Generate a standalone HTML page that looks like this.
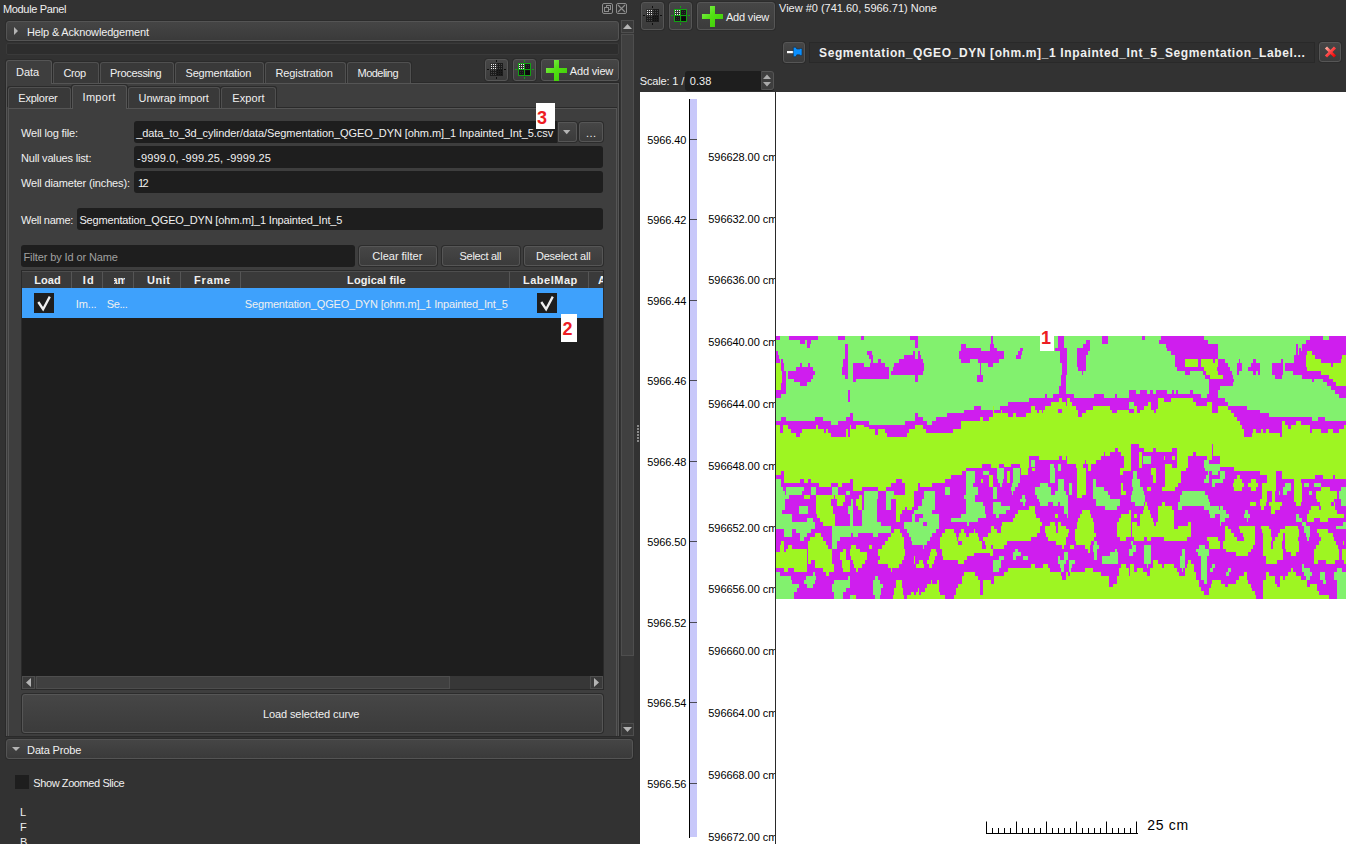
<!DOCTYPE html>
<html><head>
<meta charset="utf-8">
<title>Module Panel</title>
<style>
*{box-sizing:border-box;margin:0;padding:0}
html,body{width:1346px;height:844px;overflow:hidden;background:#323232}
body{position:relative;font-family:"Liberation Sans",sans-serif;font-size:11px;color:#f0f0f0;-webkit-font-smoothing:antialiased}
.a{position:absolute}
.t{position:absolute;white-space:nowrap;line-height:14px;height:14px}
.btn{position:absolute;border:1px solid #565656;border-radius:3px;background:linear-gradient(#464646,#3b3b3b);box-shadow:0 0 0 1px #2c2c2c;text-align:center;white-space:nowrap}
.fld{position:absolute;background:#1e1e1e;border-radius:3px;white-space:nowrap;overflow:hidden}
.tab{position:absolute;border:1px solid #505050;border-bottom:none;border-radius:3px 3px 0 0;background:#393939;box-shadow:-1px -1px 0 #2b2b2b,1px -1px 0 #2b2b2b;text-align:center;white-space:nowrap}
.tab.on{background:#3e3e3e;border-color:#555}
.bar{position:absolute;border:1px solid #545454;border-radius:3px;background:linear-gradient(#454545,#3a3a3a);box-shadow:0 0 0 1px #2c2c2c}
.hd{position:absolute;top:271px;height:17px;background:#3a3a3a;border-top:1px solid #4e4e4e;border-right:1px solid #555;font-weight:bold;text-align:center;line-height:17px;white-space:nowrap;overflow:hidden}
.b{font-weight:bold}
.ax{position:absolute;white-space:nowrap;color:#000;font-size:11px;line-height:12px;height:12px}
</style>
</head>
<body>

<svg width="0" height="0" style="position:absolute">
  <defs>
    <linearGradient id="gp" x1="0" y1="0" x2="1" y2="1"><stop offset="0" stop-color="#8cf060"></stop><stop offset="0.45" stop-color="#52e012"></stop><stop offset="1" stop-color="#3cc808"></stop></linearGradient>
    <linearGradient id="gx" x1="0" y1="0" x2="1" y2="1"><stop offset="0" stop-color="#ffb4a6"></stop><stop offset="0.45" stop-color="#ff4a4a"></stop><stop offset="1" stop-color="#f00000"></stop></linearGradient>
  </defs>
</svg>

<!-- ================= LEFT : MODULE PANEL ================= -->
<div id="left" class="a" style="left:0;top:0;width:636px;height:844px;background:#323232">

  <div class="t" style="left: 3px; top: 2px; letter-spacing: -0.344px;">Module Panel</div>

  <!-- float / close icons -->
  <svg class="a" style="left:601px;top:2px" width="28" height="13" viewBox="0 0 28 13">
    <rect x="1.5" y="1.5" width="10" height="10" rx="1.5" fill="none" stroke="#8c8c8c"></rect>
    <rect x="5.5" y="3.5" width="4" height="4" fill="none" stroke="#8c8c8c"></rect>
    <rect x="3.5" y="5.500" width="4" height="4" fill="#323232" stroke="#8c8c8c"></rect>
    <rect x="15.5" y="1.5" width="10" height="10" rx="1.5" fill="none" stroke="#8c8c8c"></rect>
    <path d="M17 3 L24 10 M24 3 L17 10" stroke="#8c8c8c" stroke-width="1.2" fill="none"></path>
  </svg>

  <!-- help bar -->
  <div class="bar" style="left:6px;top:21px;width:613px;height:20px"></div>
  <svg class="a" style="left:13px;top:26px" width="6" height="10"><path d="M1 1 L5 5 L1 9 Z" fill="#b4b4b4"></path></svg>
  <div class="t" style="left: 27px; top: 25px; letter-spacing: -0.16px;">Help &amp; Acknowledgement</div>

  <!-- thin dark strip -->
  <div class="a" style="left:6px;top:43px;width:613px;height:12px;background:#2d2d2d;border:1px solid #3a3a3a;border-radius:2px"></div>

  <!-- outer tab pane -->
  <div class="a" style="left:6px;top:83px;width:613px;height:653px;background:#3e3e3e;border:1px solid #555;border-bottom:none;box-shadow:0 0 0 1px #2a2a2a"></div>

  <!-- main tabs -->
  <div class="tab on" style="left:6px;top:60px;width:46px;height:24px"></div>
  <div class="tab" style="left:53px;top:62px;width:46px;height:21px"></div>
  <div class="tab" style="left:100px;top:62px;width:74px;height:21px"></div>
  <div class="tab" style="left:175px;top:62px;width:89px;height:21px"></div>
  <div class="tab" style="left:265px;top:62px;width:81px;height:21px"></div>
  <div class="tab" style="left:347px;top:62px;width:64px;height:21px"></div>
  <div class="t" style="left: 16px; top: 65px; letter-spacing: -0.017px;">Data</div>
  <div class="t" style="left: 63.5px; top: 66px; letter-spacing: -0.448px;">Crop</div>
  <div class="t" style="left: 110px; top: 66px; letter-spacing: -0.302px;">Processing</div>
  <div class="t" style="left: 185.5px; top: 66px; letter-spacing: -0.19px;">Segmentation</div>
  <div class="t" style="left: 275.5px; top: 66px; letter-spacing: -0.118px;">Registration</div>
  <div class="t" style="left: 357.5px; top: 66px; letter-spacing: -0.52px;">Modeling</div>

  <!-- corner buttons -->
  <div class="btn" style="left:485px;top:59px;width:23px;height:22px"></div>
  <svg class="a" style="left:485px;top:59px" width="23" height="22"><rect x="5" y="4" width="13" height="13" fill="#1c1c1c"></rect><rect x="5" y="4" width="7" height="7" fill="#303030"></rect><g fill="#f0f0f0"><rect x="6" y="5" width="1" height="1"></rect><rect x="8" y="5" width="1" height="1"></rect><rect x="10" y="5" width="1" height="1"></rect><rect x="6" y="7" width="1" height="1"></rect><rect x="8" y="7" width="1" height="1"></rect><rect x="10" y="7" width="1" height="1"></rect><rect x="6" y="9" width="1" height="1"></rect><rect x="8" y="9" width="1" height="1"></rect><rect x="10" y="9" width="1" height="1"></rect></g><g fill="#484848"><rect x="12" y="5" width="1" height="1"></rect><rect x="14" y="5" width="1" height="1"></rect><rect x="16" y="5" width="1" height="1"></rect><rect x="12" y="7" width="1" height="1"></rect><rect x="14" y="7" width="1" height="1"></rect><rect x="16" y="7" width="1" height="1"></rect><rect x="12" y="9" width="1" height="1"></rect><rect x="14" y="9" width="1" height="1"></rect><rect x="16" y="9" width="1" height="1"></rect></g><g fill="#484848"><rect x="6" y="11" width="1" height="1"></rect><rect x="8" y="11" width="1" height="1"></rect><rect x="10" y="11" width="1" height="1"></rect><rect x="6" y="13" width="1" height="1"></rect><rect x="8" y="13" width="1" height="1"></rect><rect x="10" y="13" width="1" height="1"></rect><rect x="6" y="15" width="1" height="1"></rect><rect x="8" y="15" width="1" height="1"></rect><rect x="10" y="15" width="1" height="1"></rect></g><g fill="#101010"><rect x="12" y="11" width="1" height="1"></rect><rect x="14" y="11" width="1" height="1"></rect><rect x="16" y="11" width="1" height="1"></rect><rect x="12" y="13" width="1" height="1"></rect><rect x="14" y="13" width="1" height="1"></rect><rect x="16" y="13" width="1" height="1"></rect><rect x="12" y="15" width="1" height="1"></rect><rect x="14" y="15" width="1" height="1"></rect><rect x="16" y="15" width="1" height="1"></rect></g><g fill="#0e0e0e"><rect x="11" y="1" width="1" height="2"></rect><rect x="11" y="18" width="1" height="2"></rect><rect x="2" y="10" width="2" height="1"></rect><rect x="19" y="10" width="2" height="1"></rect></g></svg>
  <div class="btn" style="left:513px;top:59px;width:23px;height:22px"></div>
  <svg class="a" style="left:513px;top:59px" width="23" height="22"><rect x="5.5" y="4.5" width="12" height="12" fill="#181818" stroke="#12a012"></rect><rect x="6" y="5" width="5" height="5" fill="#343434"></rect><path d="M11.5 4.5V16.5M5.5 10.5H17.5" stroke="#12a012" fill="none"></path><rect x="12.500" y="11.500" width="4.500" height="4.500" fill="#0a0a0a"></rect><g fill="#f0f0f0"><rect x="6" y="5" width="1" height="1"></rect><rect x="8" y="5" width="1" height="1"></rect><rect x="10" y="5" width="1" height="1"></rect><rect x="6" y="7" width="1" height="1"></rect><rect x="8" y="7" width="1" height="1"></rect><rect x="10" y="7" width="1" height="1"></rect><rect x="6" y="9" width="1" height="1"></rect><rect x="8" y="9" width="1" height="1"></rect><rect x="10" y="9" width="1" height="1"></rect></g><g fill="#303030"><rect x="13" y="6" width="1" height="1"></rect><rect x="15" y="6" width="1" height="1"></rect><rect x="13" y="8" width="1" height="1"></rect><rect x="15" y="8" width="1" height="1"></rect></g><g fill="#303030"><rect x="7" y="12" width="1" height="1"></rect><rect x="9" y="12" width="1" height="1"></rect><rect x="7" y="14" width="1" height="1"></rect><rect x="9" y="14" width="1" height="1"></rect></g><g fill="#12a012"><rect x="11" y="1" width="1" height="2"></rect><rect x="11" y="18" width="1" height="2"></rect><rect x="2" y="10" width="2" height="1"></rect><rect x="19" y="10" width="2" height="1"></rect></g></svg>
  <div class="btn" style="left:541px;top:59px;width:78px;height:22px"></div>
  <svg class="a" style="left:545.5px;top:59.5px" width="21" height="21"><path d="M0 8H8V0H13V8H21V13H13V21H8V13H0Z" fill="url(#gp)"></path></svg>
  <div class="t" style="left: 569.8px; top: 64px; letter-spacing: -0.163px;">Add view</div>

  <!-- inner tab pane -->
  <div class="a" style="left:8px;top:108px;width:609px;height:628px;background:#3e3e3e;border:1px solid #555;border-bottom:none;box-shadow:0 -1px 0 #2a2a2a"></div>

  <!-- sub tabs -->
  <div class="tab" style="left:8px;top:87px;width:63px;height:21px"></div>
  <div class="tab on" style="left:72px;top:85px;width:55px;height:24px"></div>
  <div class="tab" style="left:128px;top:87px;width:92px;height:21px"></div>
  <div class="tab" style="left:221px;top:87px;width:55px;height:21px"></div>
  <div class="t" style="left: 18.3px; top: 91px; letter-spacing: -0.21px;">Explorer</div>
  <div class="t" style="left: 82.5px; top: 90px; letter-spacing: 0.322px;">Import</div>
  <div class="t" style="left: 138.6px; top: 91px; letter-spacing: -0.111px;">Unwrap import</div>
  <div class="t" style="left: 232.3px; top: 91px; letter-spacing: 0.101px;">Export</div>

  <!-- form -->
  <div class="t" style="left: 21px; top: 126px; letter-spacing: -0.162px;">Well log file:</div>
  <div class="fld" style="left:134px;top:121px;width:424px;height:22px;border-radius:3px 0 0 3px"></div>
  <div class="t" style="left: 136.2px; top: 126px; letter-spacing: -0.073px;">_data_to_3d_cylinder/data/Segmentation_QGEO_DYN [ohm.m]_1 Inpainted_Int_5.csv</div>
  <div class="btn" style="left:558px;top:122px;width:19px;height:20px;border-radius:0 3px 3px 0"></div>
  <svg class="a" style="left:563px;top:130px" width="8" height="5"><path d="M0 0 L7.400 0 L3.700 4.300 Z" fill="#b4b4b4"></path></svg>
  <div class="btn" style="left:579px;top:122px;width:24px;height:20px"></div>
  <div class="t" style="left: 586px; top: 126px; letter-spacing: 0.414px;">...</div>

  <div class="t" style="left: 21px; top: 151px; letter-spacing: -0.179px;">Null values list:</div>
  <div class="fld" style="left:134px;top:146px;width:469px;height:22px"></div>
  <div class="t" style="left: 137.1px; top: 151px; letter-spacing: 0.141px;">-9999.0, -999.25, -9999.25</div>

  <div class="t" style="left: 21px; top: 176px; letter-spacing: -0.149px;">Well diameter (inches):</div>
  <div class="fld" style="left:134px;top:171px;width:469px;height:22px"></div>
  <div class="t" style="left: 138px; top: 176px; letter-spacing: -1.55px;">12</div>

  <div class="t" style="left: 21px; top: 213px; letter-spacing: -0.281px;">Well name:</div>
  <div class="fld" style="left:77px;top:208px;width:526px;height:22px"></div>
  <div class="t" style="left: 79.4px; top: 213px; letter-spacing: -0.158px;">Segmentation_QGEO_DYN [ohm.m]_1 Inpainted_Int_5</div>

  <!-- filter row -->
  <div class="fld" style="left:21px;top:245px;width:334px;height:22px"></div>
  <div class="t" style="left: 23.5px; top: 250px; color: rgb(160, 160, 160); letter-spacing: -0.115px;">Filter by Id or Name</div>
  <div class="btn" style="left:359px;top:246px;width:78px;height:20px"></div>
  <div class="btn" style="left:442px;top:246px;width:78px;height:20px"></div>
  <div class="btn" style="left:524px;top:246px;width:79px;height:20px"></div>
  <div class="t" style="left: 372.3px; top: 249px; letter-spacing: -0.011px;">Clear filter</div>
  <div class="t" style="left: 459.6px; top: 249px; letter-spacing: -0.316px;">Select all</div>
  <div class="t" style="left: 535.9px; top: 249px; letter-spacing: -0.196px;">Deselect all</div>

  <!-- table -->
  <div class="a" style="left:21px;top:270px;width:583px;height:420px;background:#1e1e1e;border:1px solid #2a2a2a"></div>
  <div class="hd" style="left:22px;width:50px"></div>
  <div class="hd" style="left:72px;width:31px"></div>
  <div class="hd" style="left:103px;width:31px"></div>
  <div class="hd" style="left:134px;width:47px"></div>
  <div class="hd" style="left:181px;width:60px"></div>
  <div class="hd" style="left:241px;width:269px"></div>
  <div class="hd" style="left:510px;width:79px"></div>
  <div class="hd" style="left:589px;width:14px;border-right:none"></div>
  <div class="t b" style="left: 34.2px; top: 273px; letter-spacing: 0.073px;">Load</div>
  <div class="t b" style="left: 82.8px; top: 273px; letter-spacing: 1.119px;">Id</div>
  <div class="a" style="left:113.8px;top:271px;width:11.4px;height:16px;overflow:hidden"><div class="t b" style="left: -10.3px; top: 2px; letter-spacing: 0.01px;">Name</div></div>
  <div class="t b" style="left: 147px; top: 273px; letter-spacing: 0.503px;">Unit</div>
  <div class="t b" style="left: 194.1px; top: 273px; letter-spacing: 0.767px;">Frame</div>
  <div class="t b" style="left: 347.1px; top: 273px; letter-spacing: 0.094px;">Logical file</div>
  <div class="t b" style="left: 523px; top: 273px; letter-spacing: 0.509px;">LabelMap</div>
  <div class="a" style="left:598px;top:271px;width:5px;height:16px;overflow:hidden"><div class="t b" style="left:0px;top:2px">A</div></div>

  <div class="a" style="left:22px;top:288px;width:581px;height:30px;background:#3ea1fc"></div>
  <div class="a" style="left:34px;top:293px;width:20px;height:20px;background:#1e1e1e"></div>
  <svg class="a" style="left:34px;top:293px" width="20" height="20"><path d="M4.300 9 L9.100 16.200 L15.800 3.600" stroke="#f0f0f0" stroke-width="2.3" fill="none"></path></svg>
  <div class="a" style="left:537px;top:293px;width:20px;height:20px;background:#1e1e1e"></div>
  <svg class="a" style="left:537px;top:293px" width="20" height="20"><path d="M4.300 9 L9.100 16.200 L15.800 3.600" stroke="#f0f0f0" stroke-width="2.3" fill="none"></path></svg>
  <div class="t" style="left: 75.8px; top: 297px; letter-spacing: -0.148px;">Im...</div>
  <div class="t" style="left: 106.7px; top: 297px; letter-spacing: -0.381px;">Se...</div>
  <div class="t" style="left: 244.8px; top: 297px; letter-spacing: -0.158px;">Segmentation_QGEO_DYN [ohm.m]_1 Inpainted_Int_5</div>

  <!-- h scrollbar -->
  <div class="a" style="left:22px;top:676px;width:581px;height:13px;background:#373737"></div>
  <div class="a" style="left:22px;top:676px;width:13px;height:13px;border:1px solid #4e4e4e;background:#3a3a3a"></div>
  <svg class="a" style="left:26px;top:678px" width="5" height="9"><path d="M5 0 L5 9 L0 4.5 Z" fill="#b4b4b4"></path></svg>
  <div class="a" style="left:36px;top:676px;width:414px;height:13px;border:1px solid #4e4e4e;background:#404040"></div>
  <div class="a" style="left:590px;top:676px;width:13px;height:13px;border:1px solid #4e4e4e;background:#3a3a3a"></div>
  <svg class="a" style="left:594px;top:678px" width="5" height="9"><path d="M0 0 L0 9 L5 4.5 Z" fill="#b4b4b4"></path></svg>

  <!-- load button -->
  <div class="btn" style="left:22px;top:694px;width:581px;height:39px"></div>
  <div class="t" style="left: 263px; top: 707px; letter-spacing: -0.109px;">Load selected curve</div>

  <!-- v scrollbar -->
  <div class="a" style="left:621px;top:20px;width:13px;height:716px;background:#373737"></div>
  <div class="a" style="left:621px;top:20px;width:13px;height:13px;border:1px solid #4e4e4e;background:#3a3a3a"></div>
  <svg class="a" style="left:623px;top:24px" width="9" height="5"><path d="M0 5 L9 5 L4.5 0 Z" fill="#b4b4b4"></path></svg>
  <div class="a" style="left:621px;top:34px;width:13px;height:622px;border:1px solid #4e4e4e;background:#404040"></div>
  <div class="a" style="left:621px;top:723px;width:13px;height:13px;border:1px solid #4e4e4e;background:#3a3a3a"></div>
  <svg class="a" style="left:623px;top:727px" width="9" height="5"><path d="M0 0 L9 0 L4.5 5 Z" fill="#b4b4b4"></path></svg>

  <!-- data probe -->
  <div class="bar" style="left:6px;top:739px;width:627px;height:20px"></div>
  <svg class="a" style="left:11px;top:746px" width="10" height="6"><path d="M1 1 L9 1 L5 5 Z" fill="#b4b4b4"></path></svg>
  <div class="t" style="left: 27.1px; top: 743px; letter-spacing: -0.162px;">Data Probe</div>
  <div class="a" style="left:15px;top:775px;width:14px;height:14px;background:#1e1e1e"></div>
  <div class="t" style="left: 33.3px; top: 776px; letter-spacing: -0.408px;">Show Zoomed Slice</div>
  <div class="t" style="left:20px;top:805px">L</div>
  <div class="t" style="left:20px;top:820px">F</div>
  <div class="t" style="left:20px;top:835px">B</div>
  <!-- annotations -->
  <div class="a" style="left:536px;top:103px;width:19px;height:26px;background:#fff"></div>
  <div class="a" style="left:537px;top:108px;font:bold 18px/20px 'Liberation Sans',sans-serif;color:#ed1c24">3</div>
  <div class="a" style="left:561px;top:314px;width:16px;height:28px;background:#fff"></div>
  <div class="a" style="left:562.5px;top:319px;font:bold 18px/20px 'Liberation Sans',sans-serif;color:#ed1c24">2</div>
</div>

<!-- splitter handle -->
<div class="a" style="left:634px;top:0;width:6px;height:844px;background:#323232"></div>
<svg class="a" style="left:637px;top:425px" width="2" height="17"><path d="M0 0h2v2h-2zM0 3h2v2h-2zM0 6h2v2h-2zM0 9h2v2h-2zM0 12h2v2h-2zM0 15h2v2h-2z" fill="#8a8a8a"></path></svg>

<!-- ================= RIGHT : VIEW ================= -->
<div id="right" class="a" style="left:640px;top:0;width:706px;height:844px;background:#323232">
  <div class="btn" style="left:1px;top:2px;width:23px;height:28px"></div>
  <svg class="a" style="left:1px;top:5px" width="23" height="22"><rect x="5" y="4" width="13" height="13" fill="#1c1c1c"></rect><rect x="5" y="4" width="7" height="7" fill="#303030"></rect><g fill="#f0f0f0"><rect x="6" y="5" width="1" height="1"></rect><rect x="8" y="5" width="1" height="1"></rect><rect x="10" y="5" width="1" height="1"></rect><rect x="6" y="7" width="1" height="1"></rect><rect x="8" y="7" width="1" height="1"></rect><rect x="10" y="7" width="1" height="1"></rect><rect x="6" y="9" width="1" height="1"></rect><rect x="8" y="9" width="1" height="1"></rect><rect x="10" y="9" width="1" height="1"></rect></g><g fill="#484848"><rect x="12" y="5" width="1" height="1"></rect><rect x="14" y="5" width="1" height="1"></rect><rect x="16" y="5" width="1" height="1"></rect><rect x="12" y="7" width="1" height="1"></rect><rect x="14" y="7" width="1" height="1"></rect><rect x="16" y="7" width="1" height="1"></rect><rect x="12" y="9" width="1" height="1"></rect><rect x="14" y="9" width="1" height="1"></rect><rect x="16" y="9" width="1" height="1"></rect></g><g fill="#484848"><rect x="6" y="11" width="1" height="1"></rect><rect x="8" y="11" width="1" height="1"></rect><rect x="10" y="11" width="1" height="1"></rect><rect x="6" y="13" width="1" height="1"></rect><rect x="8" y="13" width="1" height="1"></rect><rect x="10" y="13" width="1" height="1"></rect><rect x="6" y="15" width="1" height="1"></rect><rect x="8" y="15" width="1" height="1"></rect><rect x="10" y="15" width="1" height="1"></rect></g><g fill="#101010"><rect x="12" y="11" width="1" height="1"></rect><rect x="14" y="11" width="1" height="1"></rect><rect x="16" y="11" width="1" height="1"></rect><rect x="12" y="13" width="1" height="1"></rect><rect x="14" y="13" width="1" height="1"></rect><rect x="16" y="13" width="1" height="1"></rect><rect x="12" y="15" width="1" height="1"></rect><rect x="14" y="15" width="1" height="1"></rect><rect x="16" y="15" width="1" height="1"></rect></g><g fill="#0e0e0e"><rect x="11" y="1" width="1" height="2"></rect><rect x="11" y="18" width="1" height="2"></rect><rect x="2" y="10" width="2" height="1"></rect><rect x="19" y="10" width="2" height="1"></rect></g></svg>
  <div class="btn" style="left:29px;top:2px;width:23px;height:28px"></div>
  <svg class="a" style="left:29px;top:5px" width="23" height="22"><rect x="5.5" y="4.5" width="12" height="12" fill="#181818" stroke="#12a012"></rect><rect x="6" y="5" width="5" height="5" fill="#343434"></rect><path d="M11.5 4.5V16.5M5.5 10.5H17.5" stroke="#12a012" fill="none"></path><rect x="12.500" y="11.500" width="4.500" height="4.500" fill="#0a0a0a"></rect><g fill="#f0f0f0"><rect x="6" y="5" width="1" height="1"></rect><rect x="8" y="5" width="1" height="1"></rect><rect x="10" y="5" width="1" height="1"></rect><rect x="6" y="7" width="1" height="1"></rect><rect x="8" y="7" width="1" height="1"></rect><rect x="10" y="7" width="1" height="1"></rect><rect x="6" y="9" width="1" height="1"></rect><rect x="8" y="9" width="1" height="1"></rect><rect x="10" y="9" width="1" height="1"></rect></g><g fill="#303030"><rect x="13" y="6" width="1" height="1"></rect><rect x="15" y="6" width="1" height="1"></rect><rect x="13" y="8" width="1" height="1"></rect><rect x="15" y="8" width="1" height="1"></rect></g><g fill="#303030"><rect x="7" y="12" width="1" height="1"></rect><rect x="9" y="12" width="1" height="1"></rect><rect x="7" y="14" width="1" height="1"></rect><rect x="9" y="14" width="1" height="1"></rect></g><g fill="#12a012"><rect x="11" y="1" width="1" height="2"></rect><rect x="11" y="18" width="1" height="2"></rect><rect x="2" y="10" width="2" height="1"></rect><rect x="19" y="10" width="2" height="1"></rect></g></svg>
  <div class="btn" style="left:57px;top:2px;width:78px;height:28px"></div>
  <svg class="a" style="left:61.5px;top:5.5px" width="21" height="21"><path d="M0 8H8V0H13V8H21V13H13V21H8V13H0Z" fill="url(#gp)"></path></svg>
  <div class="t" style="left: 85.9px; top: 10px; letter-spacing: -0.177px;">Add view</div>
  <div class="t" style="left: 139px; top: 1px; letter-spacing: -0.007px;">View #0 (741.60, 5966.71) None</div>

  <div class="btn" style="left:143px;top:42px;width:22px;height:21px"></div>
  <svg class="a" style="left:143px;top:42px" width="22" height="21"><rect x="4" y="9" width="7" height="2.2" fill="#fff"></rect><path d="M10.3 5.200L13 5.200L13.800 7L16.5 7L17.3 6.500L19 6.500L19 13.400L17.3 13.400L16.5 12.800L13.800 12.800L13 14.700L10.3 14.700Z" fill="#0a90ff" stroke="#16283c" stroke-width="0.6"></path></svg>
  <div class="a" style="left:169px;top:42px;width:506px;height:21px;background:#2f2f2f;border:1px solid #292929"></div>
  <div class="t" style="left: 179px; top: 45px; font-size: 12px; font-weight: bold; line-height: 16px; height: 16px; letter-spacing: 0.622px;">Segmentation_QGEO_DYN [ohm.m]_1 Inpainted_Int_5_Segmentation_Label...</div>
  <div class="btn" style="left:679px;top:42px;width:22px;height:20px"></div>
  <svg class="a" style="left:679px;top:42px" width="22" height="20"><path d="M7 5.500L16 14.500M16 5.500L7 14.500" stroke="url(#gx)" stroke-width="3" fill="none"></path></svg>

  <div class="t" style="left: -0.3px; top: 74px; letter-spacing: -0.14px;">Scale: 1 /</div>
  <div class="fld" style="left:45px;top:71px;width:89px;height:20px"></div>
  <div class="a" style="left:121px;top:71px;width:13px;height:19px;background:#3e3e3e;border:1px solid #555;border-left-color:#484848;border-radius:0 3px 3px 0"></div>
  <svg class="a" style="left:121px;top:71px" width="13" height="19"><path d="M2 8L10 8L6 3.500Z M2 11L10 11L6 15.500Z" fill="#aaa"></path></svg>
  <div class="t" style="left: 49.8px; top: 74px; letter-spacing: 0.026px;">0.38</div>

  <!-- white canvas -->
  <div class="a" id="canvas" style="left:0;top:92px;width:706px;height:752px;background:#fff;overflow:hidden">
    <div class="a" style="left:50px;top:7px;width:7px;height:738px;background:#c8c8fa"></div>
    <div class="a" style="left:49px;top:7px;width:1px;height:739px;background:#000"></div>
    <div class="a" style="left:50px;top:47px;width:7px;height:1px;background:#4a4a55"></div>
    <div class="ax" style="left: 7.2px; top: 41.7px; letter-spacing: -0.078px;">5966.40</div>
    <div class="a" style="left:50px;top:127px;width:7px;height:1px;background:#4a4a55"></div>
    <div class="ax" style="left: 7.2px; top: 122.2px; letter-spacing: -0.078px;">5966.42</div>
    <div class="a" style="left:50px;top:208px;width:7px;height:1px;background:#4a4a55"></div>
    <div class="ax" style="left: 7.2px; top: 202.7px; letter-spacing: -0.078px;">5966.44</div>
    <div class="a" style="left:50px;top:288px;width:7px;height:1px;background:#4a4a55"></div>
    <div class="ax" style="left: 7.2px; top: 283.2px; letter-spacing: -0.078px;">5966.46</div>
    <div class="a" style="left:50px;top:369px;width:7px;height:1px;background:#4a4a55"></div>
    <div class="ax" style="left: 7.2px; top: 363.7px; letter-spacing: -0.078px;">5966.48</div>
    <div class="a" style="left:50px;top:449px;width:7px;height:1px;background:#4a4a55"></div>
    <div class="ax" style="left: 7.2px; top: 444.1px; letter-spacing: -0.078px;">5966.50</div>
    <div class="a" style="left:50px;top:530px;width:7px;height:1px;background:#4a4a55"></div>
    <div class="ax" style="left: 7.2px; top: 524.6px; letter-spacing: -0.078px;">5966.52</div>
    <div class="a" style="left:50px;top:610px;width:7px;height:1px;background:#4a4a55"></div>
    <div class="ax" style="left: 7.2px; top: 605.1px; letter-spacing: -0.078px;">5966.54</div>
    <div class="a" style="left:50px;top:691px;width:7px;height:1px;background:#4a4a55"></div>
    <div class="ax" style="left: 7.2px; top: 685.6px; letter-spacing: -0.078px;">5966.56</div>
    <div class="a" style="left:60px;top:0;width:75px;height:752px;overflow:hidden">
      <div class="ax" style="left: 8.3px; top: 58.8px; letter-spacing: -0.065px;">596628.00 cm</div>
      <div class="ax" style="left: 8.3px; top: 120.6px; letter-spacing: -0.065px;">596632.00 cm</div>
      <div class="ax" style="left: 8.3px; top: 182.4px; letter-spacing: -0.065px;">596636.00 cm</div>
      <div class="ax" style="left: 8.3px; top: 244.2px; letter-spacing: -0.065px;">596640.00 cm</div>
      <div class="ax" style="left: 8.3px; top: 306px; letter-spacing: -0.065px;">596644.00 cm</div>
      <div class="ax" style="left: 8.3px; top: 367.8px; letter-spacing: -0.065px;">596648.00 cm</div>
      <div class="ax" style="left: 8.3px; top: 429.5px; letter-spacing: -0.065px;">596652.00 cm</div>
      <div class="ax" style="left: 8.3px; top: 491.3px; letter-spacing: -0.065px;">596656.00 cm</div>
      <div class="ax" style="left: 8.3px; top: 553.1px; letter-spacing: -0.065px;">596660.00 cm</div>
      <div class="ax" style="left: 8.3px; top: 614.9px; letter-spacing: -0.065px;">596664.00 cm</div>
      <div class="ax" style="left: 8.3px; top: 676.7px; letter-spacing: -0.065px;">596668.00 cm</div>
      <div class="ax" style="left: 8.3px; top: 738.5px; letter-spacing: -0.065px;">596672.00 cm</div>
    </div>
    <div class="a" style="left:135px;top:0;width:1px;height:752px;background:#2a2a2a"></div>
    <svg class="a" style="left:136px;top:244px" width="570" height="263" viewBox="0 0 570 263" shape-rendering="crispEdges"><rect x="0" y="0" width="570" height="263" fill="#82f16e"></rect><path fill="#cf1eee" d="M0.0 263L0.0 85.2L5.0 85.2L5.0 81.3L10.2 81.3L10.2 85.2L39.1 85.2L39.1 81.3L46.9 81.3L46.9 85.2L54.7 85.2L54.7 89.1L62.1 89.1L62.1 85.2L70.4 85.2L70.4 81.3L73.8 81.3L73.8 77.4L76.9 77.4L76.9 85.2L93.0 85.2L93.0 89.1L129.0 89.1L129.0 85.2L139.2 85.2L139.2 77.4L142.0 77.4L142.0 81.3L147.0 81.3L147.0 85.2L150.9 85.2L150.9 89.1L156.1 89.1L156.1 85.2L159.5 85.2L159.5 81.3L171.2 81.3L171.2 77.4L187.7 77.4L187.7 73.5L190.0 73.5L190.0 263Z"></path><path fill="#cf1eee" d="M190.0 263L190.0 73.5L197.8 73.5L197.8 69.9L204.9 69.9L204.9 73.5L223.6 73.5L223.6 69.9L232.2 69.9L232.2 66.0L253.3 66.0L253.3 62.1L269.0 62.1L269.0 58.2L271.0 58.2L271.0 62.1L277.1 62.1L277.1 58.2L297.9 58.2L297.9 62.1L318.2 62.1L318.2 58.2L327.9 58.2L327.9 62.1L339.3 62.1L339.3 58.2L340.9 58.2L340.9 62.1L353.1 62.1L353.1 54.3L360.0 54.3L360.0 58.2L363.9 58.2L363.9 54.3L370.9 54.3L370.9 58.2L374.2 58.2L374.2 54.3L376.9 54.3L376.9 58.2L380.0 58.2L380.0 263Z"></path><path fill="#cf1eee" d="M380.0 263L380.0 54.3L390.9 54.3L390.9 58.2L395.6 58.2L395.6 54.3L398.0 54.3L398.0 58.2L400.3 58.2L400.3 54.3L401.9 54.3L401.9 58.2L414.1 58.2L414.1 54.3L416.7 54.3L416.7 58.2L425.3 58.2L425.3 62.1L430.8 62.1L430.8 58.2L442.1 58.2L442.1 62.1L448.8 62.1L448.8 66.0L451.9 66.0L451.9 69.9L470.7 69.9L470.7 73.5L484.0 73.5L484.0 77.4L492.9 77.4L492.9 81.3L536.4 81.3L536.4 85.2L541.9 85.2L541.9 81.3L548.9 81.3L548.9 85.2L570.0 85.2L570.0 263Z"></path><path fill="#9ef522" d="M0.0 263L0.0 89.1L3.9 89.1L3.9 97.0L7.0 97.0L7.0 89.1L11.7 89.1L11.7 93.0L15.2 93.0L15.2 97.0L20.0 97.0L20.0 100.9L23.9 100.9L23.9 97.0L25.8 97.0L25.8 93.0L39.9 93.0L39.9 89.1L42.2 89.1L42.2 93.0L48.2 93.0L48.2 97.0L50.0 97.0L50.0 93.0L51.6 93.0L51.6 97.0L55.0 97.0L55.0 100.9L69.9 100.9L69.9 93.0L71.9 93.0L71.9 100.9L73.8 100.9L73.8 89.1L75.1 89.1L75.1 93.0L79.8 93.0L79.8 89.1L88.0 89.1L88.0 90.7L93.0 90.7L93.0 93.0L98.8 93.0L98.8 98.8L102.4 98.8L102.4 93.0L108.7 93.0L108.7 97.0L110.7 97.0L110.7 100.9L131.0 100.9L131.0 97.0L132.6 97.0L132.6 93.0L139.2 93.0L139.2 89.1L147.0 89.1L147.0 93.0L150.1 93.0L150.1 97.0L176.7 97.0L176.7 93.0L185.3 93.0L185.3 85.2L190.0 85.2L190.0 263Z"></path><path fill="#9ef522" d="M190.0 263L190.0 85.2L204.1 85.2L204.1 81.3L206.9 81.3L206.9 85.2L213.1 85.2L213.1 81.3L216.9 81.3L216.9 69.9L218.1 69.9L218.1 77.4L224.7 77.4L224.7 73.5L226.0 73.5L226.0 77.4L232.2 77.4L232.2 81.3L236.9 81.3L236.9 77.4L240.0 77.4L240.0 81.3L250.2 81.3L250.2 77.4L255.4 77.4L255.4 69.9L258.8 69.9L258.8 73.5L261.2 73.5L261.2 77.4L263.2 77.4L263.2 73.5L265.8 73.5L265.8 77.4L266.9 77.4L266.9 73.5L269.4 73.5L269.4 69.9L275.2 69.9L275.2 66.0L283.0 66.0L283.0 62.1L285.7 62.1L285.7 66.0L290.1 66.0L290.1 69.9L291.3 69.9L291.3 62.1L294.0 62.1L294.0 66.0L296.3 66.0L296.3 69.9L299.5 69.9L299.5 73.5L301.8 73.5L301.8 81.3L306.0 81.3L306.0 77.4L309.6 77.4L309.6 73.5L316.7 73.5L316.7 69.9L333.9 69.9L333.9 73.5L336.2 73.5L336.2 77.4L340.9 77.4L340.9 73.5L353.1 73.5L353.1 77.4L358.1 77.4L358.1 69.9L361.2 69.9L361.2 77.4L363.9 77.4L363.9 73.5L368.3 73.5L368.3 69.9L372.2 69.9L372.2 66.0L374.8 66.0L374.8 73.5L377.7 73.5L377.7 77.4L380.0 77.4L380.0 263Z"></path><path fill="#9ef522" d="M380.0 263L380.0 72.7L381.9 72.7L381.9 62.1L387.8 62.1L387.8 66.0L394.9 66.0L394.9 62.1L416.7 62.1L416.7 66.0L420.3 66.0L420.3 69.9L430.8 69.9L430.8 66.0L436.3 66.0L436.3 76.6L442.1 76.6L442.1 69.9L451.9 69.9L451.9 73.5L455.1 73.5L455.1 77.4L458.2 77.4L458.2 81.3L461.0 81.3L461.0 85.2L463.7 85.2L463.7 89.1L466.0 89.1L466.0 93.0L468.4 93.0L468.4 100.9L475.7 100.9L475.7 97.0L477.3 97.0L477.3 93.0L480.1 93.0L480.1 97.0L485.1 97.0L485.1 93.0L487.1 93.0L487.1 97.0L489.5 97.0L489.5 93.0L492.9 93.0L492.9 97.0L504.3 97.0L504.3 100.9L505.9 100.9L505.9 85.2L509.0 85.2L509.0 89.1L512.1 89.1L512.1 93.0L514.8 93.0L514.8 89.1L520.0 89.1L520.0 85.2L525.4 85.2L525.4 89.1L534.0 89.1L534.0 97.0L536.1 97.0L536.1 93.0L545.0 93.0L545.0 97.0L552.0 97.0L552.0 93.0L556.7 93.0L556.7 97.0L563.0 97.0L563.0 93.0L567.7 93.0L567.7 89.1L570.0 89.1L570.0 263Z"></path><path fill="#cf1eee" d="M0.0 263L0.0 139.0L4.7 139.0L4.7 135.1L7.8 135.1L7.8 147.2L24.2 147.2L24.2 142.9L27.8 142.9L27.8 147.2L32.1 147.2L32.1 142.9L34.7 142.9L34.7 147.2L42.5 147.2L42.5 151.1L54.7 151.1L54.7 147.2L61.8 147.2L61.8 151.1L66.0 151.1L66.0 147.2L73.8 147.2L73.8 142.9L76.9 142.9L76.9 155.1L86.0 155.1L86.0 151.1L101.6 151.1L101.6 155.1L109.5 155.1L109.5 151.1L115.3 151.1L115.3 147.2L120.1 147.2L120.1 142.9L125.9 142.9L125.9 147.2L129.0 147.2L129.0 171.1L137.6 171.1L137.6 155.1L142.3 155.1L142.3 147.2L143.6 147.2L143.6 151.1L156.4 151.1L156.4 147.2L168.9 147.2L168.9 142.9L175.1 142.9L175.1 139.0L186.1 139.0L186.1 135.1L190.0 135.1L190.0 263Z"></path><path fill="#cf1eee" d="M190.0 263L190.0 132.0L206.4 132.0L206.4 128.2L215.0 128.2L215.0 132.0L222.8 132.0L222.8 128.2L228.3 128.2L228.3 130.6L234.6 130.6L234.6 128.2L244.0 128.2L244.0 132.0L252.6 132.0L252.6 120.1L263.2 120.1L263.2 124.3L283.0 124.3L283.0 120.1L285.7 120.1L285.7 124.3L290.1 124.3L290.1 120.1L291.3 120.1L291.3 128.2L299.5 128.2L299.5 132.0L307.3 132.0L307.3 128.2L308.8 128.2L308.8 124.3L310.1 124.3L310.1 128.2L312.0 128.2L312.0 132.0L315.1 132.0L315.1 128.2L319.8 128.2L319.8 124.3L324.8 124.3L324.8 120.1L328.4 120.1L328.4 116.0L329.2 116.0L329.2 120.1L333.9 120.1L333.9 116.0L339.3 116.0L339.3 112.1L342.0 112.1L342.0 116.0L344.8 116.0L344.8 120.1L347.9 120.1L347.9 132.0L355.0 132.0L355.0 107.9L362.8 107.9L362.8 112.1L367.5 112.1L367.5 116.0L376.9 116.0L376.9 112.1L380.0 112.1L380.0 263Z"></path><path fill="#cf1eee" d="M380.0 263L380.0 116.0L395.6 116.0L395.6 112.1L401.1 112.1L401.1 132.0L412.1 132.0L412.1 120.1L416.7 120.1L416.7 116.0L419.9 116.0L419.9 120.1L430.8 120.1L430.8 124.3L436.0 124.3L436.0 107.9L437.1 107.9L437.1 120.1L444.1 120.1L444.1 130.6L458.2 130.6L458.2 263Z"></path><path fill="#cf1eee" d="M458.2 263L458.2 135.1L484.0 135.1L484.0 139.0L491.0 139.0L491.0 146.9L500.4 146.9L500.4 135.1L505.9 135.1L505.9 142.9L517.6 142.9L517.6 146.9L525.4 146.9L525.4 142.9L538.7 142.9L538.7 139.0L547.3 139.0L547.3 142.9L556.7 142.9L556.7 139.0L559.1 139.0L559.1 142.9L570.0 142.9L570.0 263Z"></path><path fill="#9ef522" d="M190.0 263L190.0 236.0L198.6 236.0L198.6 239.9L202.2 239.9L202.2 243.8L204.4 243.8L204.4 258.7L206.9 258.7L206.9 243.8L215.0 243.8L215.0 247.7L217.8 247.7L217.8 239.9L228.3 239.9L228.3 236.0L231.9 236.0L231.9 232.1L254.9 232.1L254.9 228.2L258.8 228.2L258.8 232.1L266.9 232.1L266.9 228.2L272.1 228.2L272.1 232.1L274.4 232.1L274.4 236.0L285.1 236.0L285.1 239.9L286.2 239.9L286.2 243.8L290.1 243.8L290.1 236.0L292.4 236.0L292.4 239.9L294.0 239.9L294.0 236.0L308.8 236.0L308.8 232.1L317.0 232.1L317.0 236.0L325.3 236.0L325.3 239.9L333.1 239.9L333.1 250.8L337.0 250.8L337.0 247.7L340.9 247.7L340.9 239.9L342.5 239.9L342.5 232.1L344.8 232.1L344.8 228.2L350.3 228.2L350.3 232.1L352.6 232.1L352.6 239.9L354.2 239.9L354.2 228.2L358.1 228.2L358.1 236.0L360.5 236.0L360.5 232.1L366.7 232.1L366.7 236.0L370.6 236.0L370.6 239.9L373.7 239.9L373.7 232.1L376.9 232.1L376.9 224.3L380.0 224.3L380.0 263Z"></path><path fill="#9ef522" d="M380.0 263L380.0 224.3L382.3 224.3L382.3 228.2L385.5 228.2L385.5 232.1L387.8 232.1L387.8 228.2L398.0 228.2L398.0 232.1L401.1 232.1L401.1 236.0L402.7 236.0L402.7 239.9L408.9 239.9L408.9 232.1L410.5 232.1L410.5 228.2L412.1 228.2L412.1 224.3L414.7 224.3L414.7 228.2L417.5 228.2L417.5 236.0L420.3 236.0L420.3 243.8L423.0 243.8L423.0 250.8L425.3 250.8L425.3 254.8L428.2 254.8L428.2 258.7L433.2 258.7L433.2 251.6L434.7 251.6L434.7 247.7L436.3 247.7L436.3 243.8L444.9 243.8L444.9 247.7L448.8 247.7L448.8 250.8L451.9 250.8L451.9 247.7L459.8 247.7L459.8 243.8L462.9 243.8L462.9 239.9L468.4 239.9L468.4 236.0L470.7 236.0L470.7 243.8L472.3 243.8L472.3 247.7L474.6 247.7L474.6 251.6L476.2 251.6L476.2 254.8L478.5 254.8L478.5 258.7L480.1 258.7L480.1 262.6L487.1 262.6L487.1 243.8L490.2 243.8L490.2 236.0L492.9 236.0L492.9 239.9L498.8 239.9L498.8 247.7L501.2 247.7L501.2 250.8L503.5 250.8L503.5 239.9L507.0 239.9L507.0 243.8L509.0 243.8L509.0 239.9L512.1 239.9L512.1 236.0L515.3 236.0L515.3 232.1L516.8 232.1L516.8 236.0L520.0 236.0L520.0 239.9L525.4 239.9L525.4 243.8L530.9 243.8L530.9 250.8L534.0 250.8L534.0 247.7L541.1 247.7L541.1 254.8L542.6 254.8L542.6 258.7L552.8 258.7L552.8 262.6L570.0 262.6L570.0 263Z"></path><path fill="#cf1eee" d="M0.0 0.0H3.9V3.9H0.0ZM13.3 0.0H41.9V3.9H13.3ZM62.1 0.0H68.8V3.9H62.1ZM85.2 0.0H87.9V3.9H85.2ZM134.2 0.0H142.0V3.9H134.2ZM23.5 3.9H28.9V7.8H23.5ZM31.3 3.9H34.7V7.8H31.3ZM139.2 3.9H142.0V7.8H139.2ZM31.3 7.8H33.6V11.7H31.3ZM69.3 7.8H71.9V11.7H69.3ZM139.2 7.8H142.0V11.7H139.2ZM185.3 7.8H190.0V11.7H185.3ZM69.3 11.7H71.9V15.2H69.3ZM185.3 11.7H190.0V15.2H185.3ZM0.0 15.2H1.9V19.1H0.0ZM69.3 15.2H71.9V19.1H69.3ZM91.2 15.2H95.7V19.1H91.2ZM137.3 15.2H139.2V19.1H137.3ZM142.0 15.2H143.9V19.1H142.0ZM183.0 15.2H190.0V19.1H183.0ZM0.0 19.1H3.1V23.1H0.0ZM69.3 19.1H71.9V23.1H69.3ZM93.0 19.1H96.6V23.1H93.0ZM128.2 19.1H139.2V23.1H128.2ZM142.0 19.1H145.4V23.1H142.0ZM183.0 19.1H190.0V23.1H183.0ZM0.0 23.1H3.9V26.9H0.0ZM4.7 23.1H7.0V26.9H4.7ZM67.2 23.1H71.9V26.9H67.2ZM95.1 23.1H97.0V26.9H95.1ZM102.4 23.1H104.8V26.9H102.4ZM123.2 23.1H147.0V26.9H123.2ZM185.3 23.1H190.0V26.9H185.3ZM4.7 26.9H7.8V31.0H4.7ZM23.5 26.9H25.8V31.0H23.5ZM32.1 26.9H33.6V31.0H32.1ZM67.2 26.9H71.9V31.0H67.2ZM77.1 26.9H88.0V31.0H77.1ZM93.5 26.9H108.7V31.0H93.5ZM118.1 26.9H147.8V31.0H118.1ZM4.7 31.0H7.8V35.2H4.7ZM20.0 31.0H37.2V35.2H20.0ZM66.0 31.0H71.9V35.2H66.0ZM77.1 31.0H112.6V35.2H77.1ZM116.5 31.0H147.8V35.2H116.5ZM5.5 35.2H9.7V38.8H5.5ZM12.2 35.2H38.8V38.8H12.2ZM66.0 35.2H71.9V38.8H66.0ZM77.1 35.2H112.6V38.8H77.1ZM115.3 35.2H147.0V38.8H115.3ZM5.5 38.8H9.7V42.5H5.5ZM12.2 38.8H37.2V42.5H12.2ZM69.3 38.8H71.9V42.5H69.3ZM77.1 38.8H112.6V42.5H77.1ZM139.2 38.8H142.0V42.5H139.2ZM5.5 42.5H9.7V46.1H5.5ZM18.0 42.5H35.2V46.1H18.0ZM77.1 42.5H79.8V46.1H77.1ZM139.2 42.5H142.0V46.1H139.2ZM4.7 46.1H9.7V50.0H4.7ZM24.2 46.1H31.0V50.0H24.2ZM4.7 50.0H9.7V54.0H4.7ZM0.0 54.0H9.7V57.9H0.0ZM71.9 54.0H73.8V57.9H71.9ZM0.0 57.9H5.0V61.8H0.0ZM71.9 57.9H73.8V61.8H71.9ZM71.9 61.8H73.8V65.7H71.9Z"></path><path fill="#9ef522" d="M0.0 26.9H4.7V54.0H0.0ZM4.7 39.1H5.9V46.9H4.7Z"></path><path fill="#cf1eee" d="M215.0 0.0H216.9V7.8H215.0ZM282.3 0.0H287.7V7.8H282.3ZM326.0 0.0H331.5V7.8H326.0ZM365.9 0.0H369.1V3.9H365.9ZM310.1 3.9H314.3V7.8H310.1ZM213.5 7.8H218.1V11.7H213.5ZM282.3 7.8H287.7V11.7H282.3ZM306.5 7.8H314.3V11.7H306.5ZM190.0 11.7H204.9V15.2H190.0ZM213.5 11.7H221.3V15.2H213.5ZM244.0 11.7H247.1V15.2H244.0ZM279.1 11.7H290.9V15.2H279.1ZM301.3 11.7H314.3V15.2H301.3ZM190.0 15.2H228.3V19.1H190.0ZM242.1 15.2H246.3V19.1H242.1ZM283.8 15.2H290.9V19.1H283.8ZM301.0 15.2H312.0V19.1H301.0ZM190.0 19.1H228.3V23.1H190.0ZM240.0 19.1H244.7V23.1H240.0ZM283.8 19.1H290.9V23.1H283.8ZM301.0 19.1H310.1V23.1H301.0ZM190.0 23.1H193.9V26.9H190.0ZM202.2 23.1H223.2V26.9H202.2ZM283.8 23.1H290.9V26.9H283.8ZM301.0 23.1H310.1V26.9H301.0ZM204.1 26.9H205.2V31.0H204.1ZM212.2 26.9H216.9V31.0H212.2ZM285.7 26.9H290.9V31.0H285.7ZM301.0 26.9H310.1V31.0H301.0ZM204.1 31.0H205.2V34.7H204.1ZM285.7 31.0H290.9V34.7H285.7ZM302.3 31.0H310.1V34.7H302.3ZM204.1 34.7H205.2V38.8H204.1ZM285.7 34.7H290.9V38.8H285.7ZM305.7 34.7H307.0V38.8H305.7ZM201.3 38.8H206.9V46.1H201.3ZM285.1 38.8H290.1V46.1H285.1ZM285.1 46.1H290.1V50.0H285.1ZM283.0 50.0H290.1V58.2H283.0ZM282.0 72.7H285.7V76.9H282.0Z"></path><path fill="#82f16e" d="M353.1 66.0H358.1V72.7H353.1ZM254.9 124.3H258.8V130.6H254.9ZM274.4 128.2H278.4V132.0H274.4ZM282.3 128.2H285.4V132.0H282.3ZM366.7 120.1H374.5V128.2H366.7Z"></path><path fill="#9ef522" d="M362.8 116.0H365.9V132.0H362.8Z"></path><path fill="#cf1eee" d="M384.7 0.0H427.7V3.9H384.7ZM534.0 0.0H547.3V3.9H534.0ZM552.8 0.0H570.0V3.9H552.8ZM383.1 3.9H431.6V7.8H383.1ZM530.1 3.9H570.0V7.8H530.1ZM390.2 7.8H442.1V11.7H390.2ZM520.0 7.8H521.5V11.7H520.0ZM526.2 7.8H570.0V11.7H526.2ZM390.9 11.7H442.1V15.2H390.9ZM520.0 11.7H521.5V15.2H520.0ZM523.1 11.7H525.4V15.2H523.1ZM526.2 11.7H570.0V15.2H526.2ZM395.2 15.2H442.1V19.1H395.2ZM520.0 15.2H521.5V19.1H520.0ZM523.1 15.2H570.0V19.1H523.1ZM399.1 19.1H442.1V23.1H399.1ZM518.4 19.1H570.0V23.1H518.4ZM399.1 23.1H448.8V26.9H399.1ZM462.9 23.1H464.0V26.9H462.9ZM477.0 23.1H480.1V26.9H477.0ZM505.1 23.1H507.0V26.9H505.1ZM518.4 23.1H570.0V26.9H518.4ZM399.1 26.9H451.9V31.0H399.1ZM461.0 26.9H466.0V31.0H461.0ZM475.4 26.9H484.0V31.0H475.4ZM496.0 26.9H507.0V31.0H496.0ZM509.0 26.9H570.0V31.0H509.0ZM401.1 31.0H453.5V34.7H401.1ZM461.0 31.0H466.0V34.7H461.0ZM472.3 31.0H484.0V34.7H472.3ZM496.0 31.0H507.0V34.7H496.0ZM509.0 31.0H530.9V34.7H509.0ZM408.9 34.7H413.6V38.8H408.9ZM426.9 34.7H455.8V38.8H426.9ZM461.0 34.7H462.9V38.8H461.0ZM477.0 34.7H480.1V38.8H477.0ZM481.6 34.7H484.0V38.8H481.6ZM496.0 34.7H506.7V38.8H496.0ZM517.3 34.7H545.0V38.8H517.3ZM429.3 38.8H457.4V42.5H429.3ZM498.8 38.8H505.9V42.5H498.8ZM526.2 38.8H552.8V42.5H526.2ZM433.2 42.5H457.7V46.1H433.2ZM536.4 42.5H537.9V46.1H536.4ZM547.3 42.5H556.7V46.1H547.3ZM433.2 46.1H456.6V50.0H433.2ZM550.5 46.1H559.8V50.0H550.5ZM433.2 50.0H444.1V54.0H433.2ZM555.1 50.0H570.0V54.0H555.1ZM433.2 54.0H442.1V58.2H433.2ZM559.1 54.0H570.0V58.2H559.1ZM430.8 58.2H442.1V62.1H430.8ZM563.0 58.2H570.0V62.1H563.0Z"></path><path fill="#9ef522" d="M530.9 15.2H536.1V19.1H530.9ZM530.1 19.1H538.7V23.1H530.1ZM566.1 19.1H570.0V23.1H566.1ZM408.9 23.1H422.2V26.9H408.9ZM425.3 23.1H437.1V26.9H425.3ZM438.6 23.1H442.1V26.9H438.6ZM530.1 23.1H545.0V26.9H530.1ZM565.3 23.1H570.0V26.9H565.3ZM408.9 26.9H422.2V31.0H408.9ZM425.3 26.9H442.1V31.0H425.3ZM530.1 26.9H555.1V31.0H530.1ZM556.7 26.9H570.0V31.0H556.7ZM427.7 31.0H441.0V34.7H427.7ZM530.9 31.0H570.0V34.7H530.9ZM430.0 34.7H441.8V38.8H430.0ZM545.0 34.7H570.0V38.8H545.0ZM434.0 38.8H447.2V42.5H434.0ZM552.8 38.8H570.0V42.5H552.8ZM556.7 42.5H570.0V46.1H556.7ZM559.8 46.1H570.0V50.0H559.8Z"></path><path fill="#82f16e" d="M547.3 0.0H552.8V3.9H547.3ZM427.7 124.3H433.2V132.0H427.7ZM433.2 128.2H444.1V132.0H433.2Z"></path><path fill="#9ef522" d="M387.8 120.1H389.4V123.5H387.8ZM395.6 120.1H398.8V123.5H395.6ZM389.4 128.2H395.6V132.0H389.4Z"></path><path fill="#82f16e" d="M0.0 142.9H4.7V151.1H0.0ZM0.0 151.1H7.0V155.1H0.0ZM10.2 151.1H28.1V155.1H10.2ZM35.2 151.1H39.9V155.1H35.2ZM56.3 151.1H61.8V155.1H56.3ZM168.9 151.1H173.9V155.1H168.9ZM0.0 155.1H9.4V158.6H0.0ZM10.2 155.1H25.8V158.6H10.2ZM35.2 155.1H39.9V158.6H35.2ZM56.3 155.1H61.8V158.6H56.3ZM69.9 155.1H73.8V158.6H69.9ZM88.0 155.1H101.6V158.6H88.0ZM110.2 155.1H118.1V158.6H110.2ZM147.8 155.1H158.7V158.6H147.8ZM168.9 155.1H173.9V158.6H168.9ZM0.0 158.6H12.5V162.5H0.0ZM88.0 158.6H101.6V162.5H88.0ZM110.2 158.6H118.1V162.5H110.2ZM147.8 158.6H158.7V162.5H147.8ZM187.7 158.6H190.0V162.5H187.7ZM0.0 162.5H9.4V170.3H0.0ZM75.1 162.5H76.9V170.3H75.1ZM88.0 162.5H100.9V170.3H88.0ZM110.2 162.5H115.3V170.3H110.2ZM146.2 162.5H158.7V170.3H146.2ZM0.0 170.3H9.4V174.2H0.0ZM23.1 170.3H32.1V174.2H23.1ZM71.9 170.3H76.6V174.2H71.9ZM88.0 170.3H100.9V174.2H88.0ZM110.2 170.3H115.3V174.2H110.2ZM141.5 170.3H158.7V174.2H141.5ZM0.0 174.2H5.5V178.1H0.0ZM23.1 174.2H32.1V178.1H23.1ZM71.9 174.2H76.6V178.1H71.9ZM86.0 174.2H100.9V178.1H86.0ZM137.6 174.2H156.4V178.1H137.6ZM0.0 178.1H16.4V182.0H0.0ZM74.3 178.1H76.9V182.0H74.3ZM86.0 178.1H100.9V182.0H86.0ZM136.0 178.1H139.2V182.0H136.0ZM147.0 178.1H162.6V182.0H147.0ZM185.3 178.1H190.0V182.0H185.3ZM0.0 182.0H16.4V186.0H0.0ZM31.3 182.0H36.7V186.0H31.3ZM74.3 182.0H76.9V186.0H74.3ZM86.0 182.0H100.9V186.0H86.0ZM136.0 182.0H139.2V186.0H136.0ZM143.1 182.0H163.4V186.0H143.1ZM175.1 182.0H190.0V186.0H175.1ZM0.0 186.0H39.1V189.9H0.0ZM74.3 186.0H76.9V189.9H74.3ZM86.0 186.0H104.8V189.9H86.0ZM128.2 186.0H147.0V189.9H128.2ZM150.9 186.0H163.4V189.9H150.9ZM0.0 189.9H39.1V193.0H0.0ZM55.5 189.9H114.9V193.0H55.5ZM128.2 189.9H163.4V193.0H128.2ZM7.8 193.0H15.6V196.9H7.8ZM20.3 193.0H35.2V196.9H20.3ZM55.5 193.0H114.9V196.9H55.5ZM131.4 193.0H159.5V196.9H131.4ZM7.8 196.9H15.6V200.8H7.8ZM24.2 196.9H31.3V200.8H24.2ZM55.5 196.9H75.1V200.8H55.5ZM77.4 196.9H82.1V200.8H77.4ZM97.0 196.9H102.4V200.8H97.0ZM132.9 196.9H156.4V200.8H132.9ZM24.2 200.8H28.1V204.7H24.2ZM55.5 200.8H64.1V204.7H55.5ZM135.3 200.8H154.0V204.7H135.3ZM56.3 204.7H61.0V208.6H56.3ZM136.0 204.7H150.9V208.6H136.0ZM56.3 208.6H61.0V212.5H56.3ZM147.0 208.6H148.2V212.5H147.0ZM0.0 236.0H3.9V239.9H0.0ZM36.7 236.0H39.1V239.9H36.7ZM0.0 239.9H14.9V243.8H0.0ZM29.7 239.9H39.9V243.8H29.7ZM71.9 239.9H73.8V243.8H71.9ZM99.3 239.9H102.4V243.8H99.3ZM0.0 243.8H16.4V247.7H0.0ZM28.1 243.8H39.1V247.7H28.1ZM57.9 243.8H73.8V247.7H57.9ZM97.0 243.8H104.0V247.7H97.0ZM0.0 247.7H22.7V251.6H0.0ZM31.3 247.7H36.7V251.6H31.3ZM56.0 247.7H73.8V251.6H56.0ZM97.0 247.7H107.1V251.6H97.0ZM0.0 251.6H21.1V255.5H0.0ZM56.0 251.6H69.6V255.5H56.0ZM97.0 251.6H105.1V255.5H97.0ZM0.0 255.5H18.0V258.7H0.0ZM57.9 255.5H67.2V258.7H57.9ZM97.0 255.5H105.1V258.7H97.0ZM0.0 258.7H18.0V262.6H0.0ZM57.9 258.7H67.2V262.6H57.9ZM73.8 258.7H76.9V262.6H73.8ZM98.8 258.7H104.0V262.6H98.8Z"></path><path fill="#9ef522" d="M129.0 155.1H137.6V158.6H129.0ZM27.8 158.6H34.1V162.5H27.8ZM39.9 158.6H58.2V162.5H39.9ZM59.1 158.6H68.8V162.5H59.1ZM82.9 158.6H86.0V162.5H82.9ZM116.5 158.6H138.4V162.5H116.5ZM39.9 162.5H54.7V166.4H39.9ZM61.0 162.5H68.8V166.4H61.0ZM80.1 162.5H86.0V166.4H80.1ZM120.4 162.5H138.4V166.4H120.4ZM39.9 166.4H54.7V170.3H39.9ZM61.0 166.4H67.2V170.3H61.0ZM80.1 166.4H86.0V170.3H80.1ZM120.4 166.4H138.4V170.3H120.4ZM39.9 170.3H57.1V174.2H39.9ZM82.1 170.3H86.0V174.2H82.1ZM120.4 170.3H129.0V174.2H120.4ZM131.4 170.3H136.0V174.2H131.4ZM39.9 174.2H57.1V178.1H39.9ZM120.4 174.2H125.9V178.1H120.4ZM41.4 178.1H58.6V182.0H41.4ZM120.1 178.1H124.3V182.0H120.1ZM43.8 182.0H58.6V186.0H43.8ZM120.1 182.0H124.3V186.0H120.1ZM46.9 186.0H58.6V189.9H46.9ZM118.1 193.0H123.5V196.9H118.1ZM168.9 193.0H178.3V196.9H168.9ZM185.3 193.0H187.7V196.9H185.3ZM39.1 196.9H45.3V200.8H39.1ZM114.9 196.9H125.9V200.8H114.9ZM165.8 196.9H179.8V200.8H165.8ZM183.0 196.9H190.0V200.8H183.0ZM33.6 200.8H46.9V204.7H33.6ZM112.3 200.8H127.9V204.7H112.3ZM164.2 200.8H181.4V204.7H164.2ZM182.2 200.8H190.0V204.7H182.2ZM4.7 204.7H7.8V208.6H4.7ZM32.1 204.7H50.0V208.6H32.1ZM108.7 204.7H127.9V208.6H108.7ZM164.2 204.7H182.2V208.6H164.2ZM186.1 204.7H190.0V208.6H186.1ZM3.9 208.6H7.8V212.5H3.9ZM11.7 208.6H15.6V212.5H11.7ZM32.1 208.6H52.4V212.5H32.1ZM75.1 208.6H80.1V212.5H75.1ZM93.0 208.6H95.7V212.5H93.0ZM106.3 208.6H127.9V212.5H106.3ZM164.2 208.6H190.0V212.5H164.2ZM3.9 212.5H7.8V216.4H3.9ZM10.2 212.5H31.3V216.4H10.2ZM32.1 212.5H55.5V216.4H32.1ZM66.5 212.5H69.9V216.4H66.5ZM74.3 212.5H83.7V216.4H74.3ZM102.4 212.5H129.0V216.4H102.4ZM154.8 212.5H159.5V216.4H154.8ZM165.8 212.5H190.0V216.4H165.8ZM0.0 216.4H31.3V220.4H0.0ZM32.1 216.4H55.5V220.4H32.1ZM64.1 216.4H70.4V220.4H64.1ZM74.3 216.4H90.7V220.4H74.3ZM102.4 216.4H129.0V220.4H102.4ZM154.0 216.4H161.1V220.4H154.0ZM165.8 216.4H190.0V220.4H165.8ZM0.0 220.4H31.3V224.3H0.0ZM32.1 220.4H55.5V224.3H32.1ZM64.1 220.4H70.4V224.3H64.1ZM75.1 220.4H90.7V224.3H75.1ZM104.0 220.4H127.9V224.3H104.0ZM137.6 220.4H139.2V224.3H137.6ZM152.5 220.4H158.7V224.3H152.5ZM167.3 220.4H190.0V224.3H167.3ZM0.0 224.3H31.3V228.2H0.0ZM32.1 224.3H35.2V228.2H32.1ZM39.1 224.3H55.5V228.2H39.1ZM65.7 224.3H73.5V228.2H65.7ZM76.6 224.3H89.1V228.2H76.6ZM102.4 224.3H125.9V228.2H102.4ZM137.6 224.3H139.2V228.2H137.6ZM143.1 224.3H147.0V228.2H143.1ZM150.9 224.3H157.9V228.2H150.9ZM182.2 224.3H187.7V228.2H182.2ZM0.0 228.2H31.3V232.1H0.0ZM39.1 228.2H57.9V232.1H39.1ZM65.7 228.2H73.5V232.1H65.7ZM78.2 228.2H86.0V232.1H78.2ZM111.8 228.2H122.8V232.1H111.8ZM140.0 228.2H147.8V232.1H140.0ZM152.9 228.2H156.1V232.1H152.9ZM7.8 232.1H11.7V236.0H7.8ZM18.0 232.1H31.3V236.0H18.0ZM46.9 232.1H57.9V236.0H46.9ZM67.2 232.1H73.5V236.0H67.2ZM80.1 232.1H82.1V236.0H80.1ZM114.9 232.1H116.0V236.0H114.9ZM50.0 236.0H53.2V239.9H50.0ZM187.7 236.0H190.0V239.9H187.7ZM186.1 239.9H190.0V243.8H186.1ZM120.4 243.8H125.9V247.7H120.4ZM154.8 243.8H156.4V247.7H154.8ZM161.1 243.8H163.4V247.7H161.1ZM186.1 243.8H190.0V247.7H186.1ZM120.4 247.7H125.9V251.6H120.4ZM150.9 247.7H163.4V251.6H150.9ZM182.2 247.7H190.0V251.6H182.2ZM118.1 251.6H127.4V255.5H118.1ZM142.3 251.6H143.1V255.5H142.3ZM149.3 251.6H163.4V255.5H149.3ZM179.8 251.6H190.0V255.5H179.8ZM118.1 255.5H127.4V258.7H118.1ZM134.5 255.5H137.6V258.7H134.5ZM140.0 255.5H143.1V258.7H140.0ZM145.4 255.5H164.2V258.7H145.4ZM179.8 255.5H190.0V258.7H179.8ZM77.4 258.7H80.1V262.6H77.4ZM116.5 258.7H128.2V262.6H116.5ZM131.4 258.7H168.9V262.6H131.4ZM178.3 258.7H190.0V262.6H178.3Z"></path><path fill="#9ef522" d="M244.7 132.0H251.8V135.1H244.7ZM255.7 132.0H258.8V135.1H255.7ZM301.0 132.0H310.1V135.1H301.0ZM312.0 132.0H315.1V135.1H312.0ZM344.0 132.0H355.0V135.1H344.0ZM374.5 132.0H380.0V135.1H374.5ZM231.4 135.1H233.8V139.0H231.4ZM244.7 135.1H251.8V139.0H244.7ZM301.0 135.1H310.1V139.0H301.0ZM344.0 135.1H347.2V139.0H344.0ZM374.5 135.1H380.0V139.0H374.5ZM212.7 139.0H216.9V142.9H212.7ZM231.4 139.0H233.8V142.9H231.4ZM301.0 139.0H310.1V142.9H301.0ZM376.9 139.0H380.0V142.9H376.9ZM204.9 142.9H207.2V146.9H204.9ZM212.7 142.9H216.9V146.9H212.7ZM231.4 142.9H233.8V146.9H231.4ZM301.0 142.9H310.1V146.9H301.0ZM376.9 142.9H380.0V146.9H376.9ZM212.7 146.9H216.9V151.1H212.7ZM301.0 146.9H310.1V151.1H301.0ZM344.8 146.9H347.2V151.1H344.8ZM301.0 151.1H310.1V155.1H301.0ZM344.8 151.1H347.2V155.1H344.8ZM370.6 151.1H375.3V155.1H370.6ZM301.0 155.1H310.1V158.6H301.0ZM344.8 155.1H349.5V158.6H344.8ZM301.0 157.8H305.7V161.7H301.0ZM369.1 166.4H371.4V170.3H369.1ZM252.6 170.3H258.8V174.2H252.6ZM368.3 170.3H372.2V174.2H368.3ZM241.6 174.2H258.8V178.1H241.6ZM305.7 174.2H313.5V178.1H305.7ZM352.6 174.2H355.0V178.1H352.6ZM366.7 174.2H373.7V178.1H366.7ZM238.5 178.1H259.6V182.0H238.5ZM279.1 178.1H282.0V182.0H279.1ZM304.2 178.1H315.1V182.0H304.2ZM344.8 178.1H355.0V182.0H344.8ZM358.1 178.1H360.5V182.0H358.1ZM364.4 178.1H375.3V182.0H364.4ZM236.9 182.0H263.5V186.0H236.9ZM301.8 182.0H316.7V186.0H301.8ZM342.5 182.0H355.0V186.0H342.5ZM363.6 182.0H376.9V186.0H363.6ZM226.0 186.0H265.8V189.9H226.0ZM274.4 186.0H279.1V189.9H274.4ZM282.3 186.0H285.1V189.9H282.3ZM300.7 186.0H317.9V189.9H300.7ZM340.9 186.0H355.0V189.9H340.9ZM355.8 186.0H360.5V189.9H355.8ZM363.6 186.0H377.7V189.9H363.6ZM215.0 189.9H218.1V193.0H215.0ZM225.2 189.9H263.5V193.0H225.2ZM269.0 189.9H279.9V193.0H269.0ZM281.5 189.9H290.1V193.0H281.5ZM300.7 189.9H317.9V193.0H300.7ZM340.9 189.9H355.0V193.0H340.9ZM355.8 189.9H380.0V193.0H355.8ZM197.8 193.0H198.6V196.9H197.8ZM215.0 193.0H221.3V196.9H215.0ZM225.2 193.0H263.5V196.9H225.2ZM269.0 193.0H279.9V196.9H269.0ZM281.5 193.0H293.2V196.9H281.5ZM299.2 193.0H318.2V196.9H299.2ZM340.9 193.0H355.0V196.9H340.9ZM355.8 193.0H380.0V196.9H355.8ZM193.1 196.9H201.7V200.8H193.1ZM211.9 196.9H261.2V200.8H211.9ZM269.8 196.9H292.4V200.8H269.8ZM299.2 196.9H319.8V200.8H299.2ZM340.9 196.9H355.0V200.8H340.9ZM355.8 196.9H380.0V200.8H355.8ZM190.0 200.8H202.5V204.7H190.0ZM207.2 200.8H254.9V204.7H207.2ZM272.1 200.8H290.1V204.7H272.1ZM299.2 200.8H318.2V204.7H299.2ZM344.0 200.8H349.5V204.7H344.0ZM358.1 200.8H368.3V204.7H358.1ZM371.4 200.8H375.3V204.7H371.4ZM190.0 204.7H205.6V208.6H190.0ZM208.8 204.7H231.4V208.6H208.8ZM279.9 204.7H290.1V208.6H279.9ZM300.2 204.7H315.1V208.6H300.2ZM190.0 208.6H205.6V212.5H190.0ZM210.3 208.6H215.0V212.5H210.3ZM217.4 208.6H228.3V212.5H217.4ZM286.2 208.6H287.7V212.5H286.2ZM294.0 208.6H297.9V212.5H294.0ZM308.8 208.6H314.3V212.5H308.8ZM190.0 212.5H216.6V217.2H190.0ZM312.0 212.5H313.5V217.2H312.0ZM190.0 217.2H197.8V220.4H190.0ZM213.5 217.2H216.6V220.4H213.5ZM190.0 220.4H190.8V224.3H190.0Z"></path><path fill="#82f16e" d="M221.3 132.0H228.3V135.1H221.3ZM236.9 132.0H244.0V135.1H236.9ZM274.4 132.0H279.1V135.1H274.4ZM282.3 132.0H285.4V135.1H282.3ZM190.0 135.1H198.6V139.0H190.0ZM207.2 135.1H212.7V139.0H207.2ZM221.3 135.1H228.3V139.0H221.3ZM236.9 135.1H244.0V139.0H236.9ZM274.4 135.1H279.1V139.0H274.4ZM356.5 135.1H360.5V139.0H356.5ZM190.0 139.0H198.6V142.9H190.0ZM221.3 139.0H228.3V142.9H221.3ZM236.9 139.0H244.0V142.9H236.9ZM274.4 139.0H279.1V142.9H274.4ZM356.5 139.0H360.5V142.9H356.5ZM190.0 142.9H198.6V146.9H190.0ZM222.1 142.9H226.7V146.9H222.1ZM236.9 142.9H244.0V146.9H236.9ZM274.4 142.9H279.1V146.9H274.4ZM282.3 142.9H287.7V146.9H282.3ZM317.0 142.9H319.8V146.9H317.0ZM355.8 142.9H363.6V146.9H355.8ZM190.0 146.9H197.0V150.8H190.0ZM223.6 146.9H226.0V150.8H223.6ZM236.1 146.9H241.6V150.8H236.1ZM264.3 146.9H272.1V150.8H264.3ZM282.3 146.9H287.7V150.8H282.3ZM293.2 146.9H295.6V150.8H293.2ZM317.0 146.9H319.8V150.8H317.0ZM355.8 146.9H363.6V150.8H355.8ZM190.0 150.8H201.7V155.1H190.0ZM217.4 150.8H221.3V155.1H217.4ZM234.6 150.8H239.3V155.1H234.6ZM258.8 150.8H275.2V155.1H258.8ZM282.3 150.8H287.7V155.1H282.3ZM293.2 150.8H295.6V155.1H293.2ZM317.0 150.8H327.6V155.1H317.0ZM357.3 150.8H366.7V155.1H357.3ZM190.0 155.1H201.7V158.6H190.0ZM217.4 155.1H221.3V158.6H217.4ZM236.1 155.1H236.9V158.6H236.1ZM258.8 155.1H275.2V158.6H258.8ZM279.1 155.1H290.1V158.6H279.1ZM293.2 155.1H295.6V158.6H293.2ZM317.0 155.1H331.5V158.6H317.0ZM355.8 155.1H368.3V158.6H355.8ZM190.0 158.6H198.6V162.5H190.0ZM217.4 158.6H221.3V162.5H217.4ZM245.5 158.6H248.6V162.5H245.5ZM261.2 158.6H292.4V162.5H261.2ZM317.0 158.6H333.9V162.5H317.0ZM355.0 158.6H369.1V162.5H355.0ZM190.0 162.5H198.6V166.4H190.0ZM244.0 162.5H250.2V166.4H244.0ZM262.7 162.5H292.4V166.4H262.7ZM319.8 162.5H344.0V166.4H319.8ZM355.0 162.5H369.1V166.4H355.0ZM190.0 166.4H207.2V170.3H190.0ZM217.4 166.4H225.2V170.3H217.4ZM247.1 166.4H248.6V170.3H247.1ZM264.3 166.4H272.1V170.3H264.3ZM276.8 166.4H282.3V170.3H276.8ZM283.8 166.4H292.4V170.3H283.8ZM319.8 166.4H344.0V170.3H319.8ZM358.9 166.4H368.3V170.3H358.9ZM190.0 170.3H208.8V174.2H190.0ZM217.4 170.3H233.8V174.2H217.4ZM287.7 170.3H292.4V174.2H287.7ZM329.2 170.3H340.9V174.2H329.2ZM190.0 174.2H208.8V178.1H190.0ZM217.4 174.2H229.9V178.1H217.4ZM287.7 174.2H292.4V178.1H287.7ZM190.0 178.1H210.3V182.0H190.0ZM219.7 178.1H222.8V182.0H219.7ZM290.9 178.1H292.4V182.0H290.9ZM190.0 182.0H201.7V186.0H190.0ZM190.8 186.0H193.1V189.9H190.8ZM318.2 204.7H321.4V208.6H318.2ZM355.0 204.7H356.5V208.6H355.0ZM317.0 208.6H322.9V212.5H317.0ZM355.8 208.6H359.7V212.5H355.8ZM368.3 208.6H375.3V212.5H368.3ZM239.3 212.5H241.6V216.4H239.3ZM317.0 212.5H321.4V216.4H317.0ZM339.3 212.5H340.9V216.4H339.3ZM353.4 212.5H359.7V216.4H353.4ZM368.3 212.5H375.3V216.4H368.3ZM236.9 216.4H244.7V220.4H236.9ZM287.7 216.4H292.4V220.4H287.7ZM318.2 216.4H321.0V220.4H318.2ZM333.9 216.4H341.7V220.4H333.9ZM353.4 216.4H356.5V220.4H353.4ZM368.3 216.4H375.3V220.4H368.3ZM222.8 220.4H228.3V224.3H222.8ZM236.9 220.4H240.0V224.3H236.9ZM247.1 220.4H251.8V224.3H247.1ZM282.3 220.4H283.8V224.3H282.3ZM287.7 220.4H292.4V224.3H287.7ZM318.2 220.4H321.0V224.3H318.2ZM326.0 220.4H341.7V224.3H326.0ZM368.3 220.4H375.3V224.3H368.3ZM217.4 224.3H225.2V228.2H217.4ZM282.3 224.3H290.1V228.2H282.3ZM293.2 224.3H298.7V228.2H293.2ZM326.0 224.3H341.7V228.2H326.0ZM368.3 224.3H374.5V228.2H368.3ZM217.4 228.2H225.2V232.1H217.4ZM283.8 228.2H287.7V232.1H283.8ZM293.2 228.2H296.3V232.1H293.2ZM370.6 228.2H372.2V232.1H370.6ZM217.4 232.1H222.8V236.0H217.4ZM284.6 232.1H287.7V236.0H284.6ZM293.2 232.1H294.8V236.0H293.2Z"></path><path fill="#9ef522" d="M389.4 132.0H409.7V135.1H389.4ZM389.4 135.1H405.0V146.9H389.4ZM389.4 146.9H401.9V151.1H389.4ZM385.5 151.1H398.8V155.1H385.5ZM460.5 139.0H464.4V142.9H460.5ZM458.2 142.9H466.0V146.9H458.2ZM474.6 142.9H480.1V146.9H474.6ZM457.4 146.9H467.6V151.1H457.4ZM472.3 146.9H481.6V151.1H472.3ZM486.3 146.9H500.4V151.1H486.3ZM517.6 146.9H526.2V151.1H517.6ZM458.2 151.1H466.0V155.1H458.2ZM475.4 151.1H480.1V155.1H475.4ZM486.3 151.1H500.4V155.1H486.3ZM517.6 151.1H526.2V155.1H517.6ZM545.0 151.1H553.6V155.1H545.0ZM486.3 155.1H491.0V162.5H486.3ZM495.7 155.1H498.8V162.5H495.7ZM517.6 155.1H526.2V162.5H517.6ZM539.5 155.1H561.4V162.5H539.5ZM484.0 162.5H491.0V166.4H484.0ZM495.7 162.5H498.8V166.4H495.7ZM517.6 162.5H526.2V166.4H517.6ZM541.1 162.5H558.3V166.4H541.1ZM385.5 166.4H389.4V170.3H385.5ZM473.8 166.4H480.1V170.3H473.8ZM484.0 166.4H489.5V170.3H484.0ZM492.6 166.4H505.9V170.3H492.6ZM520.0 166.4H525.4V170.3H520.0ZM544.2 166.4H555.1V170.3H544.2ZM557.5 166.4H559.1V170.3H557.5ZM382.3 170.3H395.6V174.2H382.3ZM484.8 170.3H487.9V174.2H484.8ZM494.9 170.3H504.3V174.2H494.9ZM534.8 170.3H542.6V174.2H534.8ZM545.0 170.3H559.1V174.2H545.0ZM381.6 174.2H398.0V178.1H381.6ZM494.9 174.2H498.8V178.1H494.9ZM532.5 174.2H561.4V178.1H532.5ZM381.6 178.1H398.0V182.0H381.6ZM530.9 178.1H567.7V182.0H530.9ZM381.6 182.0H398.0V186.0H381.6ZM530.9 182.0H537.9V186.0H530.9ZM544.2 182.0H552.0V186.0H544.2ZM380.0 186.0H398.0V189.9H380.0ZM412.1 186.0H415.2V189.9H412.1ZM380.0 189.9H398.0V193.0H380.0ZM401.9 189.9H415.2V193.0H401.9ZM448.8 189.9H451.9V193.0H448.8ZM462.9 189.9H479.3V193.0H462.9ZM484.8 189.9H493.4V193.0H484.8ZM509.0 189.9H522.3V193.0H509.0ZM380.0 193.0H415.2V196.9H380.0ZM448.8 193.0H455.1V196.9H448.8ZM464.4 193.0H479.3V196.9H464.4ZM486.3 193.0H494.9V196.9H486.3ZM503.5 193.0H523.1V196.9H503.5ZM541.1 193.0H552.0V196.9H541.1ZM380.0 196.9H415.2V200.8H380.0ZM448.8 196.9H458.2V200.8H448.8ZM466.8 196.9H479.3V200.8H466.8ZM487.1 196.9H494.9V200.8H487.1ZM502.0 196.9H507.4V200.8H502.0ZM509.0 196.9H523.1V200.8H509.0ZM543.4 196.9H556.7V200.8H543.4ZM387.8 200.8H395.6V204.7H387.8ZM396.4 200.8H410.5V204.7H396.4ZM430.8 200.8H441.8V204.7H430.8ZM448.8 200.8H461.3V204.7H448.8ZM468.4 200.8H479.3V204.7H468.4ZM487.1 200.8H495.7V204.7H487.1ZM498.8 200.8H506.7V204.7H498.8ZM509.0 200.8H522.3V204.7H509.0ZM545.0 200.8H558.3V204.7H545.0ZM433.2 204.7H444.1V208.6H433.2ZM447.2 204.7H479.3V208.6H447.2ZM487.1 204.7H494.9V208.6H487.1ZM496.5 204.7H505.9V208.6H496.5ZM509.0 204.7H523.1V208.6H509.0ZM543.4 204.7H559.8V208.6H543.4ZM566.9 204.7H568.4V208.6H566.9ZM433.2 208.6H444.1V212.5H433.2ZM447.2 208.6H477.0V212.5H447.2ZM487.1 208.6H494.9V212.5H487.1ZM496.5 208.6H505.9V212.5H496.5ZM509.0 208.6H523.1V212.5H509.0ZM539.5 208.6H562.2V212.5H539.5ZM449.6 212.5H475.4V216.4H449.6ZM487.1 212.5H506.7V216.4H487.1ZM509.8 212.5H523.1V216.4H509.8ZM537.9 212.5H563.0V216.4H537.9ZM566.1 212.5H570.0V216.4H566.1ZM459.8 216.4H472.3V220.4H459.8ZM487.1 216.4H506.7V220.4H487.1ZM515.3 216.4H520.0V220.4H515.3ZM537.9 216.4H563.0V220.4H537.9ZM566.1 216.4H570.0V220.4H566.1ZM489.5 220.4H506.7V224.3H489.5ZM537.9 220.4H563.0V224.3H537.9ZM566.1 220.4H570.0V224.3H566.1ZM490.2 224.3H501.2V228.2H490.2ZM537.9 224.3H541.9V228.2H537.9ZM549.7 224.3H559.1V228.2H549.7ZM567.7 224.3H570.0V228.2H567.7Z"></path><path fill="#82f16e" d="M429.3 132.0H444.1V135.1H429.3ZM431.6 135.1H433.2V139.0H431.6ZM436.3 135.1H441.8V139.0H436.3ZM444.1 135.1H448.8V139.0H444.1ZM430.0 139.0H433.2V142.9H430.0ZM444.1 139.0H448.8V142.9H444.1ZM428.2 142.9H433.2V146.9H428.2ZM436.0 142.9H447.2V146.9H436.0ZM436.0 146.9H438.6V151.1H436.0ZM509.0 146.9H515.3V151.1H509.0ZM527.8 146.9H533.3V151.1H527.8ZM537.9 146.9H545.0V151.1H537.9ZM507.4 151.1H515.3V155.1H507.4ZM565.3 151.1H570.0V155.1H565.3ZM405.8 155.1H429.3V158.6H405.8ZM502.8 155.1H504.3V158.6H502.8ZM507.4 155.1H511.4V158.6H507.4ZM532.9 155.1H536.1V158.6H532.9ZM563.0 155.1H570.0V158.6H563.0ZM404.2 158.6H431.6V162.5H404.2ZM563.0 158.6H570.0V162.5H563.0ZM403.5 162.5H433.2V166.4H403.5ZM565.3 162.5H570.0V166.4H565.3ZM401.9 166.4H434.0V170.3H401.9ZM565.3 166.4H570.0V170.3H565.3ZM401.9 170.3H405.8V174.2H401.9ZM427.7 170.3H442.6V174.2H427.7ZM444.1 170.3H447.2V174.2H444.1ZM433.2 174.2H449.6V178.1H433.2ZM469.1 174.2H471.5V178.1H469.1ZM434.0 178.1H438.6V182.0H434.0ZM444.1 178.1H452.7V182.0H444.1ZM468.4 178.1H473.8V182.0H468.4ZM520.0 178.1H523.1V182.0H520.0ZM444.1 182.0H448.8V186.0H444.1ZM470.7 182.0H472.3V186.0H470.7ZM520.0 182.0H526.2V186.0H520.0ZM444.1 186.0H444.9V189.9H444.1ZM526.2 186.0H530.1V189.9H526.2ZM566.9 186.0H570.0V189.9H566.9ZM527.8 189.9H534.0V193.0H527.8ZM559.8 189.9H570.0V193.0H559.8ZM527.8 193.0H534.0V196.9H527.8ZM530.1 196.9H534.0V200.8H530.1ZM530.9 200.8H532.9V204.7H530.9ZM423.0 208.6H429.3V212.5H423.0ZM405.8 212.5H408.9V216.4H405.8ZM419.9 212.5H433.2V216.4H419.9ZM405.8 216.4H408.9V220.4H405.8ZM422.2 216.4H433.2V220.4H422.2ZM404.2 220.4H408.9V228.2H404.2ZM425.0 220.4H430.8V228.2H425.0ZM404.2 228.2H408.9V232.1H404.2ZM425.0 228.2H430.8V232.1H425.0ZM436.0 228.2H438.6V232.1H436.0ZM525.7 228.2H527.8V232.1H525.7ZM405.8 232.1H407.4V236.0H405.8ZM425.0 232.1H430.8V236.0H425.0ZM434.0 232.1H437.1V236.0H434.0ZM451.9 232.1H455.1V236.0H451.9ZM526.2 232.1H534.0V236.0H526.2ZM561.4 232.1H566.1V236.0H561.4ZM425.0 236.0H430.8V239.9H425.0ZM449.9 236.0H453.2V239.9H449.9ZM527.8 236.0H536.1V239.9H527.8ZM543.9 236.0H548.9V239.9H543.9ZM558.3 236.0H570.0V239.9H558.3ZM425.0 239.9H430.8V243.8H425.0ZM530.1 239.9H534.0V243.8H530.1ZM543.9 239.9H548.9V243.8H543.9ZM558.3 239.9H570.0V243.8H558.3ZM427.7 243.8H430.8V247.7H427.7ZM546.5 243.8H549.7V247.7H546.5ZM560.6 243.8H570.0V247.7H560.6ZM561.4 247.7H570.0V262.6H561.4Z"></path></svg>
    <div class="a" style="left:400px;top:234px;width:14px;height:25px;background:#fff"></div>
    <div class="a" style="left:401px;top:236px;font:bold 18px/20px 'Liberation Sans',sans-serif;color:#ed1c24">1</div>
    <svg class="a" style="left:340px;top:723px" width="170" height="24" viewBox="980 815 170 24"><path d="M986.5 821.5V833.5M992.5 828V833.5M998.5 828V833.5M1004.5 828V833.5M1010.5 828V833.5M1016.5 821.5V833.5M1022.5 828V833.5M1028.5 828V833.5M1034.5 828V833.5M1040.5 828V833.5M1046.5 821.5V833.5M1052.5 828V833.5M1058.5 828V833.5M1064.5 828V833.5M1070.5 828V833.5M1076.5 821.5V833.5M1082.5 828V833.5M1088.5 828V833.5M1094.5 828V833.5M1100.5 828V833.5M1106.5 821.5V833.5M1112.5 828V833.5M1118.5 828V833.5M1124.5 828V833.5M1130.5 828V833.5M1136.5 821.5V833.5M986 833.5H1138" stroke="#000" stroke-width="1" fill="none"></path></svg>
    <div class="a" style="left: 507.2px; top: 724px; font-size: 14px; line-height: 18px; color: rgb(0, 0, 0); white-space: nowrap; letter-spacing: 0.719px;">25 cm</div>
  </div>
</div>



</body></html>
